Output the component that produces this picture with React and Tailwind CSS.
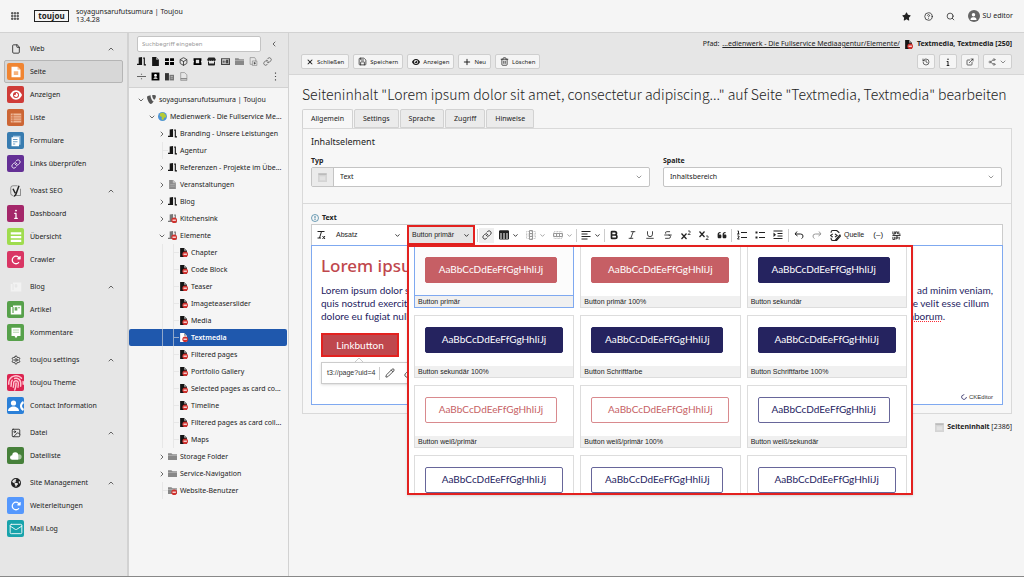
import { useState } from 'react'
import { clsx } from 'clsx'
import {
  Bold, Box, ChevronDown, ChevronLeft, ChevronRight, ChevronUp, CircleHelp, ExternalLink,
  File, History, Image, Italic, Link, Mail,
  Save, Search, Settings, Strikethrough,
  Trash2, Underline, Pencil, Share2,
} from 'lucide-react'
import {
  FaEye, FaFingerprint, FaInfo, FaPlus, FaRotateRight, FaStar, FaStore,
  FaXmark, FaEarthAmericas, FaQuoteLeft, FaUser,
} from 'react-icons/fa6'
import { SiTypo3 } from 'react-icons/si'

const MODULES = [
  { name: 'Web', icon: 'web', items: [
    { name: 'Seite', icon: 'page', bg: 'bg-[#f08532]' },
    { name: 'Anzeigen', icon: 'view', bg: 'bg-[#cf3c38]' },
    { name: 'Liste', icon: 'list', bg: 'bg-[#cc6635]' },
    { name: 'Formulare', icon: 'form', bg: 'bg-[#387cb0]' },
    { name: 'Links überprüfen', icon: 'link', bg: 'bg-[#643095]' },
  ] },
  { name: 'Yoast SEO', icon: 'yoast', items: [
    { name: 'Dashboard', icon: 'info', bg: 'bg-[#a4276a]' },
    { name: 'Übersicht', icon: 'bars', bg: 'bg-[#9fdc4e]' },
    { name: 'Crawler', icon: 'reload', bg: 'bg-[#d93664]' },
  ] },
  { name: 'Blog', icon: 'blog', items: [
    { name: 'Artikel', icon: 'article', bg: 'bg-[#57a14b]' },
    { name: 'Kommentare', icon: 'comment', bg: 'bg-[#57a14b]' },
  ] },
  { name: 'toujou settings', icon: 'gear', items: [
    { name: 'toujou Theme', icon: 'finger', bg: 'bg-[#dc2450]' },
    { name: 'Contact Information', icon: 'contact', bg: 'bg-[#2b80d8]' },
  ] },
  { name: 'Datei', icon: 'image', items: [
    { name: 'Dateiliste', icon: 'cloud', bg: 'bg-[#46803a]' },
  ] },
  { name: 'Site Management', icon: 'globe', items: [
    { name: 'Weiterleitungen', icon: 'reload', bg: 'bg-[#5598fd]' },
    { name: 'Mail Log', icon: 'mail', bg: 'bg-[#18a3ab]' },
  ] },
]

const TREE = [
  { name: 'soyagunsarufutsumura | Toujou', level: 0, icon: 'typo3', open: true },
  { name: 'Medienwerk - Die Fullservice Me...', level: 1, icon: 'world', open: true },
  { name: 'Branding - Unsere Leistungen', level: 2, icon: 'door', open: false },
  { name: 'Agentur', level: 2, icon: 'door' },
  { name: 'Referenzen - Projekte im Übe...', level: 2, icon: 'door', open: false },
  { name: 'Veranstaltungen', level: 2, icon: 'grayDoc', open: false },
  { name: 'Blog', level: 2, icon: 'door', open: false },
  { name: 'Kitchensink', level: 2, icon: 'grayDoor', open: false, hidden: true },
  { name: 'Elemente', level: 2, icon: 'grayDoor', open: true, hidden: true },
  { name: 'Chapter', level: 3, icon: 'doc', hidden: true },
  { name: 'Code Block', level: 3, icon: 'doc', hidden: true },
  { name: 'Teaser', level: 3, icon: 'doc', hidden: true },
  { name: 'Imageteaserslider', level: 3, icon: 'doc', hidden: true },
  { name: 'Media', level: 3, icon: 'doc', hidden: true },
  { name: 'Textmedia', level: 3, icon: 'doc', hidden: true, active: true },
  { name: 'Filtered pages', level: 3, icon: 'doc', hidden: true },
  { name: 'Portfolio Gallery', level: 3, icon: 'doc', hidden: true },
  { name: 'Selected pages as card co...', level: 3, icon: 'doc', hidden: true },
  { name: 'Timeline', level: 3, icon: 'doc', hidden: true },
  { name: 'Filtered pages as card coll...', level: 3, icon: 'doc', hidden: true },
  { name: 'Maps', level: 3, icon: 'doc', hidden: true },
  { name: 'Storage Folder', level: 2, icon: 'folder', open: false },
  { name: 'Service-Navigation', level: 2, icon: 'folder', open: false },
  { name: 'Website-Benutzer', level: 2, icon: 'folder', hidden: true },
]

const STYLES = [
  { name: 'Button primär', look: 'bg-[#c65f65] border-[#c65f65] text-white' },
  { name: 'Button primär 100%', look: 'bg-[#c65f65] border-[#c65f65] text-white', wide: true },
  { name: 'Button sekundär', look: 'bg-[#25235f] border-[#25235f] text-white' },
  { name: 'Button sekundär 100%', look: 'bg-[#25235f] border-[#25235f] text-white', wide: true },
  { name: 'Button Schriftfarbe', look: 'bg-[#25235f] border-[#25235f] text-white' },
  { name: 'Button Schriftfarbe 100%', look: 'bg-[#25235f] border-[#25235f] text-white', wide: true },
  { name: 'Button weiß/primär', look: 'bg-white border-[#d98a8e] text-[#c65f65]' },
  { name: 'Button weiß/primär 100%', look: 'bg-white border-[#d98a8e] text-[#c65f65]', wide: true },
  { name: 'Button weiß/sekundär', look: 'bg-white border-[#67669a] text-[#25235f]' },
  { name: 'Button weiß/sekundär 100%', look: 'bg-white border-[#67669a] text-[#25235f]', wide: true },
  { name: 'Button weiß/Schriftfarbe', look: 'bg-white border-[#67669a] text-[#25235f]' },
  { name: 'Button weiß/Schriftfarbe 100%', look: 'bg-white border-[#67669a] text-[#25235f]', wide: true },
]

const TABS = ['Allgemein', 'Settings', 'Sprache', 'Zugriff', 'Hinweise']

function ModuleIcon({ name }) {
  switch (name) {
    case 'page':
      return (
        <svg viewBox="0 0 16 16" className="size-3">
          <path d="M2 1h8l4 4v10H2z" fill="#fff" />
          <path d="M10 1v4h4z" fill="#f9c49a" />
          <path d="M5 7h6v5H5z" fill="#f6b27c" />
        </svg>
      )
    case 'view':
      return <FaEye className="size-3 text-white" />
    case 'list':
      return (
        <svg viewBox="0 0 16 16" className="size-3">
          <path d="M1 2h14v12H1z" fill="#eeb899" />
          <path d="M1 5h14M1 8h14M1 11h14M4 2v12" stroke="#cc6635" />
        </svg>
      )
    case 'form':
      return (
        <svg viewBox="0 0 16 16" className="size-3">
          <path d="M4 1h10v12H4z" fill="#9cc4e2" />
          <path d="M2 3h10v12H2z" fill="#fff" />
          <path d="M4 6h6M4 9h6M4 12h3" stroke="#387cb0" />
        </svg>
      )
    case 'link':
      return <Link className="size-2.5 text-white" />
    case 'info':
      return <FaInfo className="size-2.5 text-white" />
    case 'bars':
      return (
        <svg viewBox="0 0 16 16" className="size-3">
          <path d="M1 3h14M1 8h14M1 13h14" stroke="#fff" strokeWidth="3" />
        </svg>
      )
    case 'reload':
      return <FaRotateRight className="size-2.5 text-white" />
    case 'article':
      return (
        <svg viewBox="0 0 16 16" className="size-3">
          <path d="M4 2h11v12H1V4h3z" fill="#fff" />
          <path d="M4 4v8M7 5h2v3H7zM11 5h2" stroke="#57a14b" strokeWidth="1.500" fill="none" />
        </svg>
      )
    case 'blog':
      return (
        <svg viewBox="0 0 16 16" className="size-3">
          <path d="M4 2h11v12H1V4h3z" fill="#f2f2f2" />
          <path d="M4 4v8M7 5h2v3H7z" stroke="#e0e0e0" fill="none" />
        </svg>
      )
    case 'comment':
      return (
        <svg viewBox="0 0 16 16" className="size-3">
          <path d="M2 1h12v11h-4l-2 3-2-3H2z" fill="#fff" />
          <path d="M4 4h8M4 7h8" stroke="#57a14b" strokeOpacity=".6" />
        </svg>
      )
    case 'finger':
      return <FaFingerprint className="size-4 text-[#ffc3cf]" />
    case 'contact':
      return (
        <svg viewBox="0 0 16 16" className="size-4" fill="#fff">
          <circle cx="5.500" cy="5" r="2.600" />
          <path d="M0 13c0-3 3-4.500 5.500-4.500S11 10 11 13z" />
          <path d="M15 3c-4 2-4 8 0 10l1-2-1.500-1.500q-1-1.500 0-3L16 5z" />
        </svg>
      )
    case 'cloud':
      return (
        <svg viewBox="0 0 16 16" className="size-3">
          <circle cx="12" cy="9" r="3.500" fill="#a9c6a3" />
          <path d="M3 13a3 3 0 0 1 0-6 4 4 0 0 1 8 0v6z" fill="#fff" />
        </svg>
      )
    case 'mail':
      return <Mail className="size-3.5 text-white" strokeWidth={1.5} />
    case 'web':
      return <File className="size-2.5" />
    case 'yoast':
      return (
        <svg viewBox="0 0 16 16" className="size-3" fill="none" stroke="#222">
          <path d="M10 1H4a3 3 0 0 0-3 3v7a3 3 0 0 0 3 3M14 5v9H8" strokeOpacity=".6" />
          <path d="M4 5l3 6M12 1L8 12q-1 3-3 3" strokeWidth="2" />
        </svg>
      )
    case 'gear':
      return <Settings className="size-2.5" />
    case 'image':
      return <Image className="size-2.5" />
    case 'globe':
      return <FaEarthAmericas className="size-2.5" />
    default:
      return null
  }
}

function PageIcon({ name, hidden, active }) {
  const dark = active ? '#fff' : '#151515'
  return (
    <svg viewBox="0 0 16 16" className="size-[9px] shrink-0">
      {name === 'doc' && <path d="M2 0h7l5 5v11H2z" fill={dark} />}
      {name === 'doc' && <path d="M9 0v5h5z" fill="#999" />}
      {name === 'grayDoc' && <path d="M2 0h7l5 5v11H2z" fill="#8c8c8c" />}
      {name === 'grayDoc' && <path d="M9 0v5h5zM4 8h8M4 11h8" fill="#ccc" stroke="#bbb" />}
      {(name === 'door' || name === 'grayDoor') && (
        <g fill={name === 'door' ? dark : '#777'}>
          <path d="M3 1l6-1v14H0v-2h3z" />
          <path d="M11 1h3v12h2v2h-4V3h-1z" />
        </g>
      )}
      {name === 'folder' && <path d="M0 2h6l2 2h8v10H0z" fill="#888" />}
      {name === 'folder' && <path d="M0 6h16" stroke="#ccc" />}
      {name === 'world' && <circle cx="8" cy="8" r="8" fill="#4d94d8" />}
      {name === 'world' && <path d="M4 2l5-1 4 3 2 5-4 1-2 5-3-3 1-3-4-2z" fill="#b5cb36" />}
      {hidden && <circle cx="11" cy="11" r="5" fill="#d0312d" />}
      {hidden && <path d="M8 11h6" stroke="#fff" strokeWidth="2" />}
    </svg>
  )
}

function ModuleMenu() {
  const [active, setActive] = useState('Seite')
  return (
    <nav className="w-[129px] shrink-0 space-y-[4px] border-r-2 border-[#d2d2d2] bg-[#e6e6e6] px-1 pt-1">
      {MODULES.map((group) => (
        <div key={group.name}>
          <button className="flex h-[23px] w-full items-center gap-[6px] pl-[3px] pr-2">
            <span className="flex w-[17px] justify-center"><ModuleIcon name={group.icon} /></span>
            <span className="flex-1 text-left">{group.name}</span>
            <ChevronUp className="size-2" />
          </button>
          {group.items.map((item) => (
            <button
              key={item.name}
              onClick={() => setActive(item.name)}
              className={clsx(
                'flex h-[23px] w-full items-center gap-[6px] rounded-xs border pl-[2px]',
                active === item.name ? 'border-[#b5b5b5] bg-[#d7d7d7]' : 'border-transparent',
              )}
            >
              <span className={clsx('flex size-[17px] items-center justify-center rounded-xs', item.bg)}>
                <ModuleIcon name={item.icon} />
              </span>
              {item.name}
            </button>
          ))}
        </div>
      ))}
    </nav>
  )
}

function TreeRow({ node }) {
  const Chevron = node.open ? ChevronDown : ChevronRight
  const leaf = node.open === undefined
  return (
    <li
      className={clsx(
        'flex h-[17px] items-center rounded-xs',
        node.active && 'bg-[#1f58ad] font-semibold text-white',
        node.level === 0 && 'pl-[7px]',
        node.level === 1 && 'pl-[18px]',
        node.level === 2 && (leaf ? 'pl-[33px]' : 'pl-[28px]'),
        node.level === 3 && 'pl-[33px]',
      )}
    >
      {node.level === 3 && <span className="h-full w-[11px] border-l border-[#ddd]/60" />}
      {leaf ? (
        <span className="flex h-full w-[6px] items-center border-l border-[#ddd]/60">
          <span className="h-px w-full bg-[#ddd]/60" />
        </span>
      ) : (
        <button className="mr-px flex w-[10px] justify-center" aria-label={node.name}>
          <Chevron className="size-2" />
        </button>
      )}
      {node.icon === 'typo3' ? (
        <SiTypo3 className="size-[9px] shrink-0 text-[#555]" />
      ) : (
        <PageIcon name={node.icon} hidden={node.hidden} active={node.active} />
      )}
      <a href="#" className="ml-[3px] whitespace-nowrap">{node.name}</a>
    </li>
  )
}

function PageTree() {
  return (
    <aside className="w-[160px] shrink-0 border-r border-[#d2d2d2]">
      <div className="border-b border-[#d2d2d2] bg-[#e6e6e6] px-2 pb-[6px] pt-[3px]">
        <div className="flex items-center justify-between pr-[2px]">
          <input
            type="text"
            aria-label="Suchbegriff eingeben"
            placeholder="Suchbegriff eingeben"
            className="h-4 w-[124px] rounded-xs border border-[#c4c4c4] bg-white px-1 text-[6px] placeholder:text-[#999]"
          />
          <button aria-label="Einklappen"><ChevronLeft className="size-2" /></button>
        </div>
        <div className="mt-[5px] flex gap-[5px] [&>*]:size-[9px] [&>*]:shrink-0">
          <PageIcon name="door" />
          <PageIcon name="doc" />
          <svg viewBox="0 0 16 16"><path d="M0 2h7v5H0zM9 2h7v5H9zM0 9h7v5H0zM9 9h7v5H9z" /></svg>
          <Box />
          <svg viewBox="0 0 16 16"><path d="M1 2h14v4l-1 2 1 2v4H1v-4l1-2-1-2zM5 5v6h6V5z" fillRule="evenodd" /></svg>
          <FaStore />
          <svg viewBox="0 0 16 16" fill="none" stroke="#444" strokeWidth="2"><path d="M1 3h14v10H1zM4 6v4M7 6v4M10 6h2v4h-2z" /></svg>
          <PageIcon name="folder" />
          <svg viewBox="0 0 16 16" fill="none" stroke="#777"><path d="M2 1h8l2 3v4M2 1v12h4M6 7h8v8H6z" /><path d="M9 9l3 2-3 2z" fill="#111" /></svg>
          <Link className="text-[#555]" />
        </div>
        <div className="mt-[6px] flex items-center gap-[5px] [&>*]:size-[9px] [&>*]:shrink-0">
          <svg viewBox="0 0 16 16"><path d="M0 8h16M7 4h2M7 12h2" stroke="#555" strokeWidth="1.600" /></svg>
          <svg viewBox="0 0 16 16"><path d="M1 1h14v14H1z" /><circle cx="8" cy="6" r="2.500" fill="#fff" /><path d="M4 12q4-5 8 0z" fill="#fff" /></svg>
          <svg viewBox="0 0 16 16"><path d="M0 2h7v13H0z" fill="#333" /><path d="M8 5h8v10H8z" fill="#777" /><path d="M10 8h4M10 11h4" stroke="#ddd" /></svg>
          <svg viewBox="0 0 16 16" fill="none" stroke="#777"><path d="M3 1h7l4 4v10H3z" /><path d="M3 12h11" strokeWidth="2" /></svg>
          <button aria-label="Mehr" className="ml-auto">
            <svg viewBox="0 0 16 16" className="size-[9px]" fill="#444"><path d="M7 1h2v2H7zM7 7h2v2H7zM7 13h2v2H7z" /></svg>
          </button>
        </div>
      </div>
      <ul className="pr-px pt-[3px]">
        {TREE.map((node) => <TreeRow key={node.name} node={node} />)}
      </ul>
    </aside>
  )
}

function DocButton({ children, label }) {
  return (
    <button
      aria-label={label}
      className="flex h-[15px] items-center gap-[3px] rounded-xs border border-[#cfcfcf] bg-[#f5f5f5] px-1 text-[6px]"
    >
      {children}
    </button>
  )
}

function DocHeader() {
  return (
    <div className="border-b border-[#d6d6d6] bg-[#e6e6e6] px-3 pb-[5px] pt-[5px]">
      <div className="flex h-3 items-center justify-end gap-1">
        <span>
          Pfad: <a href="#" className="ml-px underline">...edienwerk - Die Fullservice Mediaagentur/Elemente/</a>
        </span>
        <PageIcon name="doc" hidden />
        <strong>Textmedia, Textmedia [250]</strong>
      </div>
      <div className="mt-1 flex items-center gap-1">
        <DocButton><FaXmark className="size-2" />Schließen</DocButton>
        <DocButton><Save className="size-[9px]" />Speichern</DocButton>
        <DocButton><FaEye className="size-2" />Anzeigen</DocButton>
        <DocButton><FaPlus className="size-2" />Neu</DocButton>
        <DocButton><Trash2 className="size-[9px]" />Löschen</DocButton>
        <span className="flex-1" />
        <DocButton label="Verlauf"><History className="size-2" /></DocButton>
        <DocButton label="Info"><FaInfo className="size-2" /></DocButton>
        <DocButton label="Neues Fenster"><ExternalLink className="size-2" /></DocButton>
        <DocButton label="Teilen"><Share2 className="size-2 text-[#555]" /><ChevronDown className="size-2 text-[#555]" /></DocButton>
      </div>
    </div>
  )
}

function SelectField({ id, label, value, icon }) {
  return (
    <div className="flex-1">
      <label htmlFor={id} className="block h-[11px] font-bold leading-[10px]">{label}</label>
      <div className="flex h-5 rounded-xs border border-[#c4c4c4] bg-white">
        {icon && (
          <span className="flex w-[22px] items-center justify-center border-r border-[#c4c4c4] bg-[#ebebeb]">
            <ContentIcon />
          </span>
        )}
        <div className="relative flex flex-1 items-center">
          <select id={id} className="h-full w-full appearance-none bg-transparent pl-[6px] outline-none">
            <option>{value}</option>
          </select>
          <ChevronDown className="pointer-events-none absolute right-[6px] size-2 text-[#666]" />
        </div>
      </div>
    </div>
  )
}

function ContentIcon() {
  return (
    <svg viewBox="0 0 16 16" className="size-[9px]">
      <path d="M0 0h16v16H0z" fill="#d4d4d4" />
      <path d="M1 1h14v2H1z" fill="#b0b0b0" />
      <path d="M3 6h10v7H3z" fill="#e2e2e2" />
    </svg>
  )
}

function Tool({ icon: Icon, label, menu, muted, on, strokeWidth }) {
  return (
    <button
      aria-label={label}
      className={clsx(
        'flex h-[15px] shrink-0 items-center justify-center gap-[3px]',
        menu && 'w-[27px]',
        on && 'mr-px w-[15px] bg-[#efefef]',
        !menu && !on && 'w-[18px]',
        muted && 'text-[#999]',
      )}
    >
      <Icon className="size-[10px]" strokeWidth={strokeWidth} />
      {menu && <ChevronDown className="size-[7px]" strokeWidth={3} />}
    </button>
  )
}

function Separator() {
  return <span className="h-[13px] w-px shrink-0 bg-[#ccc]" />
}

function ToolSvg({ children, className }) {
  return (
    <svg viewBox="0 0 20 20" fill="none" stroke="currentColor" strokeWidth="2" className={className}>
      {children}
    </svg>
  )
}

function ClearIcon(props) {
  return <ToolSvg {...props}><path d="M3 3h14M11 3L7 16M3 16h7M13 12l5 6M18 12l-5 6" /></ToolSvg>
}

function TableIcon(props) {
  return (
    <ToolSvg {...props}>
      <path d="M1 2h18v4H1z" fill="currentColor" />
      <path d="M1 2h18v16H1zM1 10h18M1 14h18M7 5v13M13 5v13" />
    </ToolSvg>
  )
}

function ColumnIcon(props) {
  return (
    <ToolSvg {...props}>
      <path d="M1 3h18v14H1zM1 8h18M1 12h18" strokeWidth="1" strokeDasharray="2 1" />
      <path d="M7 1h6v18H7zM7 7h6M7 13h6" />
    </ToolSvg>
  )
}

function RowIcon(props) {
  return (
    <ToolSvg {...props}>
      <path d="M2 3h16v14H2zM8 3v14M13 3v14" strokeWidth="1" strokeDasharray="2 1" />
      <path d="M1 7h18v6H1zM7 7v6M13 7v6" />
    </ToolSvg>
  )
}

function AlignIcon(props) {
  return <ToolSvg {...props}><path d="M1 3h18M1 8h12M1 13h18M1 18h12" /></ToolSvg>
}

function SuperIcon(props) {
  return <ToolSvg {...props}><path d="M1 7l10 11M11 7L1 18" strokeWidth="2.500" /><path d="M14 2h4v3l-4 4h5" strokeWidth="1.500" /></ToolSvg>
}

function SubIcon(props) {
  return <ToolSvg {...props}><path d="M1 3l10 11M11 3L1 14" strokeWidth="2.500" /><path d="M14 12h4v3l-4 4h5" strokeWidth="1.500" /></ToolSvg>
}

function NumberedIcon(props) {
  return <ToolSvg {...props}><path d="M8 5h12M8 15h12M1 2h2v6M0 8h5M1 12h3v2l-3 4h4" /></ToolSvg>
}

function BulletIcon(props) {
  return <ToolSvg {...props}><path d="M8 5h12M8 15h12" /><path d="M1 5h4M1 15h4" strokeWidth="4" /></ToolSvg>
}

function IndentIcon(props) {
  return <ToolSvg {...props}><path d="M1 2h18M9 7h10M9 12h10M1 17h18" /><path d="M1 5l5 4.500-5 4.500z" fill="currentColor" strokeWidth="0" /></ToolSvg>
}

function UndoIcon(props) {
  return <ToolSvg {...props}><path d="M6 3L2 8l5 4M2 8h11q5 0 5 4t-3 5" /></ToolSvg>
}

function RedoIcon(props) {
  return <ToolSvg {...props}><path d="M14 3l4 5-5 4M18 8H7q-5 0-5 4t3 5" /></ToolSvg>
}

function SourceIcon(props) {
  return (
    <ToolSvg {...props}>
      <path d="M12 1H5a3 3 0 0 0-3 3v1M12 1l5 4M2 14v2a3 3 0 0 0 3 3h3M5 7l-4 3 4 3M9 7l4 3-4 3M10 18l8-9 1 2-7 8h-3z" />
    </ToolSvg>
  )
}

function StylePopup() {
  const [selected, setSelected] = useState('Button primär')
  return (
    <div className="absolute left-0 top-full z-10 h-[250px] w-[506px] overflow-hidden border-2 border-[#e3211f] bg-white shadow-sm">
      <div className="-mt-[2px] grid grid-cols-3 gap-x-[6px] gap-y-[7px] pl-[5px] pr-[4px]">
        {STYLES.map((style) => (
          <button
            key={style.name}
            onClick={() => setSelected(style.name)}
            className={clsx('border text-left', selected === style.name ? 'border-[#7fa9f0]' : 'border-[#ddd]')}
          >
            <span
              className={clsx(
                'flex h-[50px] items-center border-b pb-[2px] pl-[10px]',
                selected === style.name ? 'border-[#7fa9f0] bg-[#fcfcfc]' : 'border-transparent',
              )}
            >
              <span
                className={clsx(
                  "flex h-[26px] items-center justify-center rounded-xs border pb-px font-['Lato'] text-[10px]",
                  style.wide ? 'w-[138px]' : 'w-[132px]',
                  style.look,
                )}
              >
                AaBbCcDdEeFfGgHhIiJj
              </span>
            </span>
            <span className="flex h-[11px] items-center bg-[#f0f0f0] px-[3px]">{style.name}</span>
          </button>
        ))}
      </div>
    </div>
  )
}

function EditorToolbar() {
  return (
    <div className="flex h-[21px] items-center border border-b-0 border-[#ccc] bg-white">
      <Tool icon={ClearIcon} label="Formatierung entfernen" />
      <button className="flex w-[77px] shrink-0 items-center justify-between px-[6px]">
        Absatz<ChevronDown className="size-[7px]" strokeWidth={3} />
      </button>
      <div className="relative shrink-0">
        <button className="flex h-[20px] w-[68px] items-center justify-between border-2 border-[#e3211f] bg-[#e5e5e5] px-[3px]">
          Button primär<ChevronDown className="size-[7px]" strokeWidth={3} />
        </button>
        <StylePopup />
      </div>
      <span className="w-[2px]" />
      <Separator />
      <span className="w-px" />
      <Tool icon={Link} label="Link" on />
      <Tool icon={TableIcon} label="Tabelle" menu />
      <Tool icon={ColumnIcon} label="Spalte" menu muted />
      <Tool icon={RowIcon} label="Zeile" menu muted />
      <Separator />
      <Tool icon={AlignIcon} label="Ausrichtung" menu />
      <Separator />
      <Tool icon={Bold} label="Fett" strokeWidth={4} />
      <Tool icon={Italic} label="Kursiv" strokeWidth={2} />
      <Tool icon={Underline} label="Unterstrichen" strokeWidth={2} />
      <Tool icon={Strikethrough} label="Durchgestrichen" strokeWidth={2} />
      <Tool icon={SuperIcon} label="Hochgestellt" />
      <Tool icon={SubIcon} label="Tiefgestellt" />
      <Tool icon={FaQuoteLeft} label="Zitat" />
      <Separator />
      <span className="w-px" />
      <Tool icon={NumberedIcon} label="Nummerierung" />
      <Tool icon={BulletIcon} label="Aufzählung" />
      <Tool icon={IndentIcon} label="Einzug" />
      <span className="w-px" />
      <Separator />
      <span className="w-px" />
      <Tool icon={UndoIcon} label="Rückgängig" />
      <Tool icon={RedoIcon} label="Wiederholen" muted />
      <button className="mx-1 flex shrink-0 items-center gap-[3px]">
        <SourceIcon className="size-[11px]" />Quelle
      </button>
      <button className="ml-px w-[18px] shrink-0 text-[8px]" aria-label="Weiches Trennzeichen">(–)</button>
      <button className="flex w-[18px] shrink-0 justify-center" aria-label="Leerzeichen">
        <svg viewBox="0 0 20 20" className="size-[9px]" fill="none" stroke="currentColor" strokeWidth="2">
          <path d="M2 1v6h4V1M8 7V2h4v5M15 1v6h4M1 10h18M2 13v6h4v-6M9 19v-6h4v3H9M16 13v6" />
        </svg>
      </button>
    </div>
  )
}

function Editor() {
  return (
    <div className="font-['Liberation_Sans'] text-[7px]">
      <EditorToolbar />
      <div className="flex h-[160px] flex-col border border-[#7fa9f0] bg-white px-[9px] font-['Lato'] text-[10px] text-[#25235f]">
        <h2 className="mt-[8px] overflow-hidden whitespace-nowrap font-['Noto_Sans'] text-[17px] font-medium leading-6 text-[#bf474d]">
          Lorem ipsum
        </h2>
        <div className="mt-[6px] whitespace-nowrap leading-[13px]">
          <p className="flex justify-between">
            <span>Lorem ipsum dolor sit amet, consectetur adipiscing elit, sed do eiusmod tempor incididunt ut labore et dolore magna aliqua. Ut enim</span>
            <span>ad minim veniam,</span>
          </p>
          <p className="flex justify-between pr-1">
            <span>quis nostrud exercitation ullamco laboris nisi ut aliquip ex ea commodo consequat. Duis aute irure dolor in reprehenderit in</span>
            <span>voluptate velit esse cillum</span>
          </p>
          <p className="flex justify-between pr-12">
            <span>dolore eu fugiat nulla pariatur. Excepteur sint occaecat cupidatat non proident, sunt in culpa qui officia deserunt mollit</span>
            <span>anim id est <span className="underline decoration-red-500 decoration-dotted">laborum</span>.</span>
          </p>
        </div>
        <a
          href="#"
          className="mt-[10px] flex h-[24px] w-[78px] items-center justify-center border-2 border-[#e3211f] bg-[#bf474d] text-[10px] text-white"
        >
          Linkbutton
        </a>
        <div className="mt-[1px] ml-[34px] h-[4px]">
          <svg viewBox="0 0 8 4" className="h-[4px] w-2" fill="#fff" stroke="#ccc"><path d="M0 4l4-4 4 4" /></svg>
        </div>
        <div className="flex h-[22px] w-[120px] items-center border border-[#ccc] bg-white pl-[5px] font-['Liberation_Sans'] text-[7px] text-[#333] shadow-sm">
          <a href="#">t3://page?uid=4</a>
          <span className="ml-1 mr-[5px] h-[13px] w-px bg-[#ccc]" />
          <Pencil className="size-[10px]" />
          <Link className="ml-[9px] size-[10px]" />
        </div>
        <div className="mt-auto flex items-center justify-end gap-[2px] pb-[2px] font-['Liberation_Sans'] text-[6px] leading-[10px] text-[#333]">
          <svg viewBox="0 0 16 16" className="size-[6px]" fill="none" stroke="#25235f" strokeWidth="2"><path d="M9 1L2 5v6l6 4 6-4V8" /></svg>
          CKEditor
        </div>
      </div>
    </div>
  )
}

function EditForm() {
  const [tab, setTab] = useState('Allgemein')
  return (
    <main className="px-[13px] pr-[12px]">
      <h1 className="mt-[7px] whitespace-nowrap font-['Noto_Sans_CJK_JP'] text-[14px] font-light leading-6">
        Seiteninhalt "Lorem ipsum dolor sit amet, consectetur adipiscing..." auf Seite "Textmedia, Textmedia" bearbeiten
      </h1>
      <div className="mt-[3px] flex gap-px" role="tablist">
        {TABS.map((name) => (
          <button
            key={name}
            role="tab"
            aria-selected={tab === name}
            onClick={() => setTab(name)}
            className={clsx(
              'h-[19px] rounded-t-xs border border-[#d2d2d2] px-2',
              tab === name ? '-mb-px border-b-0 bg-[#f7f7f7]' : 'bg-[#ebebeb]',
            )}
          >
            {name}
          </button>
        ))}
      </div>
      <section className="border border-[#d9d9d9] bg-[#f7f7f7]">
        <div className="border-b border-[#d9d9d9] px-2 pb-4 pr-[9px]">
          <h2 className="pt-[5px] text-[9px] leading-4">Inhaltselement</h2>
          <div className="mt-[6px] flex gap-[13px]">
            <SelectField id="typ" label="Typ" value="Text" icon />
            <SelectField id="spalte" label="Spalte" value="Inhaltsbereich" />
          </div>
        </div>
        <div className="px-2 pb-2 pt-[8px]">
          <div className="flex h-3 items-center gap-[3px] font-bold">
            <svg viewBox="0 0 16 16" className="size-2" fill="none" stroke="#3f7f9f" strokeWidth="1.500">
              <circle cx="8" cy="8" r="7" />
              <path d="M8 4v5M8 10v2" strokeWidth="2" />
            </svg>
            Text
          </div>
          <Editor />
        </div>
      </section>
      <div className="mt-2 flex items-center justify-end gap-[3px]">
        <ContentIcon />
        <span><strong>Seiteninhalt</strong> [2386]</span>
      </div>
    </main>
  )
}

export default function App() {
  return (
    <div className="flex min-h-screen flex-col border-b border-[#888] bg-[#f5f5f5] font-['Noto_Sans',sans-serif] text-[7px] leading-[10px] text-[#222]">
      <header className="flex h-[33px] shrink-0 items-center border-b border-[#d2d2d2] px-[11px]">
        <button aria-label="Module">
          <svg viewBox="0 0 16 16" className="size-2" fill="#888" stroke="#222">
            <path d="M1 1h3v3H1zM6.500 1h3v3h-3zM12 1h3v3h-3zM1 6.500h3v3H1zM6.500 6.500h3v3h-3zM12 6.500h3v3h-3zM1 12h3v3H1zM6.500 12h3v3h-3zM12 12h3v3h-3z" />
          </svg>
        </button>
        <a href="#" className="ml-[15px] flex h-3 w-[35px] items-center justify-center border border-[#222] text-[8px] font-bold">toujou</a>
        <div className="ml-[7px] leading-[8px]">
          <div>soyagunsarufutsumura | Toujou</div>
          <div>13.4.28</div>
        </div>
        <div className="ml-auto flex items-center gap-[13px]">
          <button aria-label="Lesezeichen"><FaStar className="size-[9px]" /></button>
          <button aria-label="Hilfe"><CircleHelp className="size-[9px]" /></button>
          <button aria-label="Suche"><Search className="size-[9px]" /></button>
          <button className="flex items-center gap-[3px]">
            <span className="flex size-3 items-center justify-center rounded-full bg-[#666]">
              <FaUser className="size-[7px] text-white" />
            </span>
            SU editor
          </button>
        </div>
      </header>
      <div className="flex flex-1">
        <ModuleMenu />
        <PageTree />
        <div className="min-w-0 flex-1">
          <DocHeader />
          <EditForm />
        </div>
      </div>
    </div>
  )
}
